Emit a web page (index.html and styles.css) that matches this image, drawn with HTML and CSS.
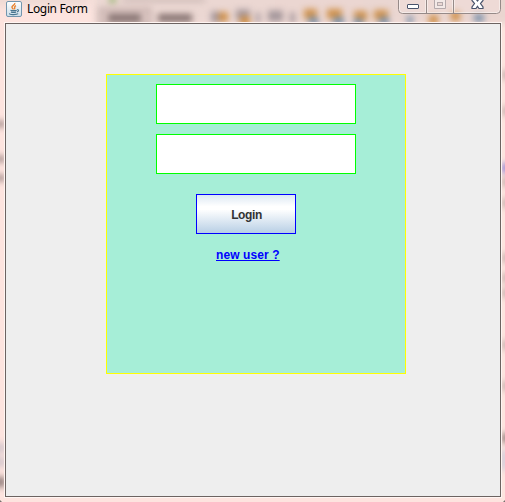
FILE: index.html
```html
<!DOCTYPE html>
<html lang="en">
<head>
<meta charset="utf-8">
<title>Login Form</title>
<link rel="stylesheet" href="styles.css">
</head>
<body>
<div class="window">
  <svg class="glass" width="505" height="502" viewBox="0 0 505 502" aria-hidden="true">
    <defs>
      <filter id="soft" x="-20%" y="-20%" width="140%" height="140%" color-interpolation-filters="sRGB"><feGaussianBlur stdDeviation="3"/></filter>
      <filter id="haze" x="-20%" y="-100%" width="140%" height="300%" color-interpolation-filters="sRGB"><feGaussianBlur stdDeviation="5"/></filter>
      <linearGradient id="band" x1="0" x2="1"><stop offset="0" stop-color="#ecd8d3"/><stop offset="1" stop-color="#ead5d0"/></linearGradient>
    </defs>
    <rect x="94" y="-12" width="430" height="36" fill="url(#band)" filter="url(#soft)"/>
    <rect x="-10" y="-8" width="100" height="13" fill="#ecd8d3" filter="url(#haze)"/>
    <g filter="url(#soft)">
      <rect x="100" y="9" width="50" height="18" fill="#dcc6c2" stroke="#b8a3a0" stroke-width="2"/>
      <path d="M108 18H141M158 18H192" stroke="#857270" stroke-width="8"/>
      <path d="M122 0H205" stroke="#bfadaa" stroke-width="3"/>
      <path d="M109 0H116" stroke="#8bae65" stroke-width="5"/>
      <path d="M211 17H220M236 15H250M268 16H283M256 18H260M290 18H295" stroke="#a6989c" stroke-width="11"/>
      <path d="M219 17H228M240 21H250M304 14H317M327 14H342M354 16H367M374 15H388M429 20H438M451 16H460" stroke="#d0914a" stroke-width="10"/>
      <path d="M309 19l9 4M333 21h11M354 22h9M379 21h10M407 20h6M474 18h10" stroke="#7c92ab" stroke-width="8"/>
      <path d="M-4 124H5M-4 159H5M-4 178H5" stroke="#9b8684" stroke-width="6"/>
      <path d="M-4 448H5M-4 462H5" stroke="#d1c5cb" stroke-width="10"/>
      <path d="M-4 482H5" stroke="#8a7775" stroke-width="10"/>
      <path d="M502 75H510M502 111H510M502 182H510M502 203H510M502 258H510M502 278H510M502 293H510M502 345H510M502 386H510" stroke="#c8aeab" stroke-width="9"/>
      <path d="M502 168H510" stroke="#8f7dd2" stroke-width="9"/>
      <path d="M502 438H510" stroke="#8e7775" stroke-width="9"/>
      <path d="M504 450V470" stroke="#cfc9d8" stroke-width="6"/>
    </g>
    <path d="M0 500v2h2M505 500v2h-2" fill="#77706e"/>
  </svg>
  <header class="titlebar">
    <svg class="java" width="16" height="16" viewBox="0 0 16 16" aria-hidden="true">
      <defs><linearGradient id="tile" x1="0" y1="0" x2="0" y2="1"><stop offset="0" stop-color="#fff"/><stop offset="1" stop-color="#cbdde8"/></linearGradient></defs>
      <rect x=".5" y=".5" width="15" height="15" rx="1.5" fill="url(#tile)" stroke="#7396ae"/>
      <path d="M8.8 2C9.5 4 5.2 4.700 6 6.400c.3.800 1.200 1.200 1.200 2.100M10 4.700C7.300 5.900 9.700 6.500 8.300 8.300" fill="none" stroke="#e9822e" stroke-width="1.400"/>
      <path d="M4.500 9.200c1 .6 5 .6 6.200 0M5 11c1 .6 4 .6 5 0M11.200 8.700c1.800-.3 1.800 1.900-.3 2.200M3.800 12.500c-1.500 1.300 7 1.500 8.300.1" fill="none" stroke="#48758f" stroke-width="1.200"/>
    </svg>
    <h1 class="title">Login Form</h1>
    <svg class="controls" width="104" height="16" viewBox="0 0 104 16" aria-label="Window controls">
      <path d="M.5 0V9.500Q.5 13.500 4.500 13.500H98.500Q102.500 13.500 102.500 9.500V0M28.500 0V13M55.500 0V13" fill="#f5e5e1" fill-opacity=".35" stroke="#968a88"/>
      <path d="M1.500 0V9.500Q1.500 12.500 4.500 12.500H27.500V0M29.500 0V12.500H54.500V0M56.500 0V12.500H98.500Q101.500 12.500 101.500 9.500V0" fill="none" stroke="#fff" stroke-opacity=".45"/>
      <rect x="9.500" y="4.500" width="11" height="4" rx=".5" fill="#fff" stroke="#49536b"/>
      <path d="M36.500 -2H47.500V8.500H36.500Z" fill="#f3e9e7" stroke="#b5aaac"/>
      <rect x="39.500" y="2.500" width="5" height="3" fill="#ead7d3" stroke="#b5aaac"/>
      <path d="M74 -1H78L79.500 1L81 -1H85V.5L82.500 3.500L85 7V8.500H81L79.500 6.300L78 8.500H74V7L76.500 3.500L74 .5Z" fill="#fff" stroke="#49536b" stroke-width="1.200"/>
    </svg>
  </header>
  <main class="client">
    <form class="panel">
      <input class="field" type="text" aria-label="User name">
      <input class="field" type="password" aria-label="Password">
      <button class="login" type="button">Login</button>
      <a class="signup" href="#">new user ?</a>
    </form>
  </main>
</div>
</body>
</html>
```
FILE: styles.css
```css
* {
  box-sizing: border-box;
}

body {
  margin: 0;
  overflow: hidden;
}

.window {
  position: relative;
  width: 505px;
  height: 502px;
  padding: 0 4px 5px 5px;
  background: #fde4df;
  overflow: hidden;
}

.glass {
  position: absolute;
  inset: 0;
}

.titlebar {
  position: relative;
  display: flex;
  height: 23px;
}

.java {
  flex: none;
  margin: 1px 5px 0 1px;
}

.title {
  margin: 0;
  font: 12px/18px "Noto Sans", "Open Sans", sans-serif;
  letter-spacing: -0.35px;
  color: #000;
}

.controls {
  margin-left: auto;
  margin-right: -1px;
}

.client {
  position: relative;
  height: 474px;
  padding: 50px 0 0 100px;
  border: 1px solid #6c6361;
  box-shadow: 0 0 0 1px #fff5f2;
  background: #eee;
}

.panel {
  display: flex;
  flex-direction: column;
  width: 300px;
  height: 300px;
  padding: 9px 49px;
  border: 1px solid #ff0;
  background: #a6eed7;
}

.field {
  width: 200px;
  height: 40px;
  margin: 0 0 10px;
  padding: 0 4px;
  border: 1px solid #0f0;
  border-radius: 0;
  outline: 0;
  background: #fff;
}

.login {
  width: 100px;
  height: 40px;
  margin: 10px 0 0 40px;
  padding: 2px 0 0 1px;
  border: 1px solid #00f;
  border-radius: 0;
  background: linear-gradient(#dde8f3 0%, #fff 30%, #fff 38%, #b8cfe5 100%);
  font: bold 12px/14px "Liberation Sans", sans-serif;
  letter-spacing: -0.4px;
  color: #333;
}

.signup {
  align-self: flex-start;
  margin: 14px 0 0 60px;
  font: bold 12px/14px "Liberation Sans", sans-serif;
  letter-spacing: 0.1px;
  color: #00f;
  white-space: nowrap;
}
```
